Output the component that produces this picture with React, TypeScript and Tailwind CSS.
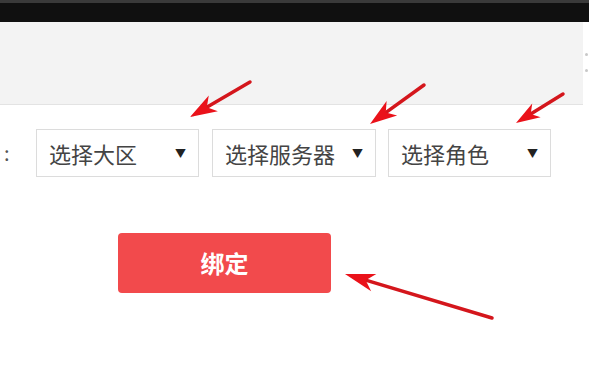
import React from "react";

type Arrow = { tail: [number, number]; tip: [number, number]; len: number; half: number; sw: number };

const arrows: Arrow[] = [
  { tail: [250, 82], tip: [190, 117], len: 27, half: 9, sw: 3.5 },
  { tail: [424, 85], tip: [370, 124], len: 27, half: 9, sw: 3.5 },
  { tail: [563, 94], tip: [516, 123], len: 24, half: 8, sw: 3.5 },
  { tail: [492, 318], tip: [345, 274], len: 30, half: 9, sw: 3.5 },
];

function ArrowShape({ a }: { a: Arrow }) {
  const [tx, ty] = a.tail;
  const [px, py] = a.tip;
  const dx = px - tx;
  const dy = py - ty;
  const m = Math.hypot(dx, dy);
  const ux = dx / m;
  const uy = dy / m;
  const nx = -uy;
  const ny = ux;
  const bx = px - ux * a.len;
  const by = py - uy * a.len;
  const notchX = px - ux * a.len * 0.72;
  const notchY = py - uy * a.len * 0.72;
  const pts = [
    [px, py],
    [bx + nx * a.half, by + ny * a.half],
    [notchX, notchY],
    [bx - nx * a.half, by - ny * a.half],
  ]
    .map((p) => p.join(","))
    .join(" ");
  return (
    <g>
      <line x1={tx} y1={ty} x2={notchX} y2={notchY} stroke="#d4161c" strokeWidth={a.sw} strokeLinecap="round" />
      <polygon points={pts} fill="#ea121a" />
    </g>
  );
}

function Select({ label, w }: { label: string; w: string }) {
  return (
    <div
      className={`${w} h-[48px] border border-[#dcdcdc] bg-white flex items-center justify-between pl-[12px] pr-[12px] text-[22px] text-[#444]`}
    >
      <span className="leading-none">{label}</span>
      <span className="text-[11px] text-[#222] leading-none">▼</span>
    </div>
  );
}

export default function App() {
  return (
    <div
      className="relative w-[589px] h-[378px] overflow-hidden bg-white"
      style={{ fontFamily: '"Noto Sans CJK SC", "Noto Sans", sans-serif' }}
    >
      <div className="h-[3px] bg-[#3a3a3a]" />
      <div className="h-[19px] bg-[#101010]" />
      <div className="flex">
        <div className="w-[583px] h-[83px] bg-[#f3f3f3] border-b border-[#e3e3e3]" />
        <div className="flex-1 flex flex-col items-center pt-[31px] gap-[13px]">
          <div className="w-[3px] h-[3px] rounded-full bg-[#c8c8c8]" />
          <div className="w-[3px] h-[3px] rounded-full bg-[#c8c8c8]" />
        </div>
      </div>
      <div className="flex items-center pt-[24px]">
        <div className="w-[36px] pl-[4px] text-[20px] text-[#555] leading-none">:</div>
        <Select label="选择大区" w="w-[163px]" />
        <div className="w-[13px]" />
        <Select label="选择服务器" w="w-[164px]" />
        <div className="w-[12px]" />
        <Select label="选择角色" w="w-[163px]" />
      </div>
      <div className="pt-[56px] pl-[118px]">
        <div className="w-[213px] h-[60px] rounded-[4px] bg-[#f24a4c] flex items-center justify-center text-white text-[24px] font-bold">
          绑定
        </div>
      </div>
      <svg className="absolute inset-0 pointer-events-none" width="589" height="378" viewBox="0 0 589 378">
        {arrows.map((a, i) => (
          <ArrowShape key={i} a={a} />
        ))}
      </svg>
    </div>
  );
}
